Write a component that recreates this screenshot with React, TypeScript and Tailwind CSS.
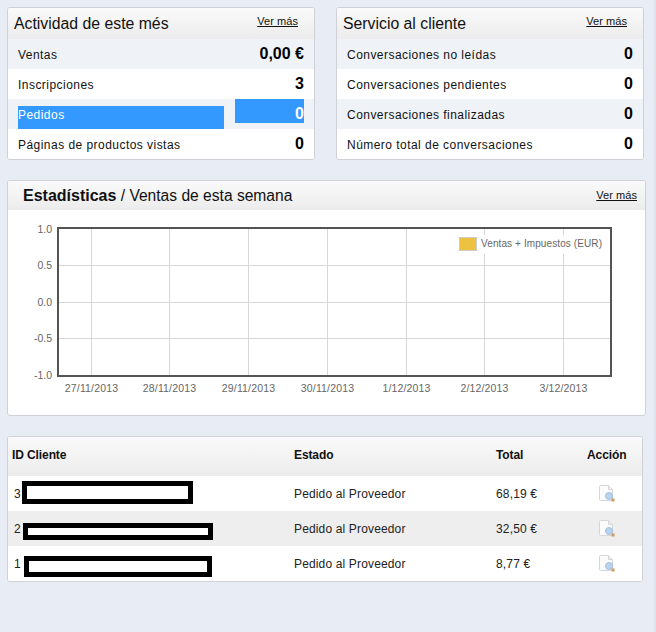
const FONT = "font-['Liberation_Sans',Arial,sans-serif]";

const activity = [
  { label: "Ventas", value: "0,00 €" },
  { label: "Inscripciones", value: "3" },
  { label: "Pedidos", value: "0", selected: true },
  { label: "Páginas de productos vistas", value: "0" },
];

const service = [
  { label: "Conversaciones no leídas", value: "0" },
  { label: "Conversaciones pendientes", value: "0" },
  { label: "Conversaciones finalizadas", value: "0" },
  { label: "Número total de conversaciones", value: "0" },
];

const orders = [
  { id: "3", total: "68,19 €", box: "ml-[2px] mt-[-6px] h-[23px] w-[171px]" },
  { id: "2", total: "32,50 €", box: "ml-[3px] mt-[1px] h-[17px] w-[190px]" },
  { id: "1", total: "8,77 €", box: "ml-[4px] mt-[-1px] h-[21px] w-[188px]" },
];

function ViewIcon() {
  return (
    <svg width="16" height="17" viewBox="0 0 16 17">
      <path d="M0.5 1.5 Q0.5 0.5 1.5 0.5 H9.5 L13.5 4.5 V14.5 Q13.5 15.5 12.5 15.5 H1.5 Q0.5 15.5 0.5 14.5 Z" fill="#fbfbfb" stroke="#d4d6da" />
      <path d="M9.5 0.5 V4.5 H13.5" fill="#eeeeee" stroke="#d4d6da" />
      <circle cx="10" cy="11" r="3.5" fill="#b9d4f0" stroke="#a3c0e0" />
      <rect x="12.5" y="13.5" width="3" height="3" fill="#cf9a5c" />
    </svg>
  );
}

function StatCard({ title, rows }: { title: string; rows: { label: string; value: string; selected?: boolean }[] }) {
  return (
    <div className="w-[308px] overflow-hidden rounded-[3px] border border-[#cfd1d6] bg-white">
      <div className="flex h-[31px] items-start justify-between bg-gradient-to-b from-[#fafafa] to-[#ececec] pl-[6px] pr-[16px]">
        <span className="mt-[6px] text-[15.8px] leading-[20px] text-[#111]">{title}</span>
        <a className="mt-[7px] text-[11px] leading-[13px] tracking-[0.05px] text-[#111] underline">Ver más</a>
      </div>
      {rows.map((r, i) => (
        <div key={r.label} className={`flex h-[30px] justify-between pl-[10px] pr-[10px] ${i % 2 === 0 ? "bg-[#eff3f8]" : "bg-white"}`}>
          {r.selected ? (
            <>
              <span className="mt-[7px] h-[23px] w-[206px] bg-[#3399ff] pt-[1px] text-[12px] leading-[16px] tracking-[0.46px] text-white">{r.label}</span>
              <span className="h-[24px] w-[69px] bg-[#3399ff] pt-[6px] text-right text-[16px] font-bold leading-[18px] text-white">{r.value}</span>
            </>
          ) : (
            <>
              <span className="mt-[8px] text-[12px] leading-[16px] tracking-[0.46px] text-[#111]">{r.label}</span>
              <span className="mt-[6px] text-[16px] font-bold leading-[18px] text-black">{r.value}</span>
            </>
          )}
        </div>
      ))}
    </div>
  );
}

function SalesChart() {
  const xs = [91, 169, 248, 327, 406, 484, 563];
  const dates = ["27/11/2013", "28/11/2013", "29/11/2013", "30/11/2013", "1/12/2013", "2/12/2013", "3/12/2013"];
  const ys = [
    { y: 229, label: "1.0" },
    { y: 265, label: "0.5" },
    { y: 302, label: "0.0" },
    { y: 338, label: "-0.5" },
    { y: 375, label: "-1.0" },
  ];
  return (
    <svg width="637" height="205" viewBox="8 210 637 205" className="block" fontFamily="'Liberation Sans', Arial, sans-serif" fontSize="10.5" fill="#666">
      {xs.map((x) => (
        <line key={x} x1={x + 0.5} x2={x + 0.5} y1="228" y2="376" stroke="#d6d6d6" />
      ))}
      {ys.slice(1, 4).map((t) => (
        <line key={t.y} x1="58" x2="611" y1={t.y + 0.5} y2={t.y + 0.5} stroke="#d6d6d6" />
      ))}
      <rect x="58" y="228" width="553" height="148" fill="none" stroke="#545454" strokeWidth="2" />
      {ys.map((t) => (
        <text key={t.label} x="52" y={t.y + 4} textAnchor="end">{t.label}</text>
      ))}
      {xs.map((x, i) => (
        <text key={x} x={x + 0.5} y="392" textAnchor="middle" letterSpacing="0.15">{dates[i]}</text>
      ))}
      <rect x="456" y="235" width="151" height="19" fill="#fff" opacity="0.85" />
      <rect x="459.5" y="237.5" width="17" height="13" fill="#edc240" stroke="#cccccc" />
      <text x="481" y="247" fontSize="10" letterSpacing="0.1">Ventas + Impuestos (EUR)</text>
    </svg>
  );
}

export default function App() {
  return (
    <div className={`h-[632px] w-[656px] overflow-hidden border-r-2 border-[#dfe3ee] bg-[#e8ecf4] pl-[7px] pt-[7px] ${FONT}`}>
      <div className="flex gap-[21px]">
        <StatCard title="Actividad de este més" rows={activity} />
        <StatCard title="Servicio al cliente" rows={service} />
      </div>

      <div className="mt-[20px] h-[236px] w-[639px] overflow-hidden rounded-[3px] border border-[#cfd1d6] bg-white">
        <div className="flex h-[29px] items-start justify-between bg-gradient-to-b from-[#fafafa] to-[#ececec] pl-[15px] pr-[8px]">
          <span className="mt-[5px] text-[15.6px] leading-[19px] text-[#111]">
            <b className="text-[16px] font-bold">Estadísticas</b> / Ventas de esta semana
          </span>
          <a className="mt-[7px] text-[11px] leading-[14px] tracking-[0.05px] text-[#111] underline">Ver más</a>
        </div>
        <SalesChart />
      </div>

      <div className="mt-[20px] w-[636px] overflow-hidden rounded-[3px] border border-[#cfd1d6] bg-white text-[12px] tracking-[0.15px]">
        <div className="grid h-[39px] grid-cols-[286px_202px_91px_1fr] items-start bg-gradient-to-b from-[#fafafa] to-[#ececec] pt-[11px] font-bold leading-[14px] tracking-[-0.1px] text-[#111]">
          <span className="pl-[4px]">ID Cliente</span>
          <span>Estado</span>
          <span>Total</span>
          <span>Acción</span>
        </div>
        {orders.map((o, i) => (
          <div key={o.id} className={`grid h-[35px] grid-cols-[286px_202px_91px_1fr] items-start leading-[14px] text-[#222] ${i === 1 ? "bg-[#eeeeee]" : "bg-white"}`}>
            <div className="flex pl-[6px] pt-[11px]">
              <span className="w-[6px]">{o.id}</span>
              <span className={`border-[5px] border-black bg-white ${o.box}`} />
            </div>
            <span className="pt-[11px]">Pedido al Proveedor</span>
            <span className="pt-[11px]">{o.total}</span>
            <span className="pl-[12px] pt-[9px]"><ViewIcon /></span>
          </div>
        ))}
      </div>
    </div>
  );
}
